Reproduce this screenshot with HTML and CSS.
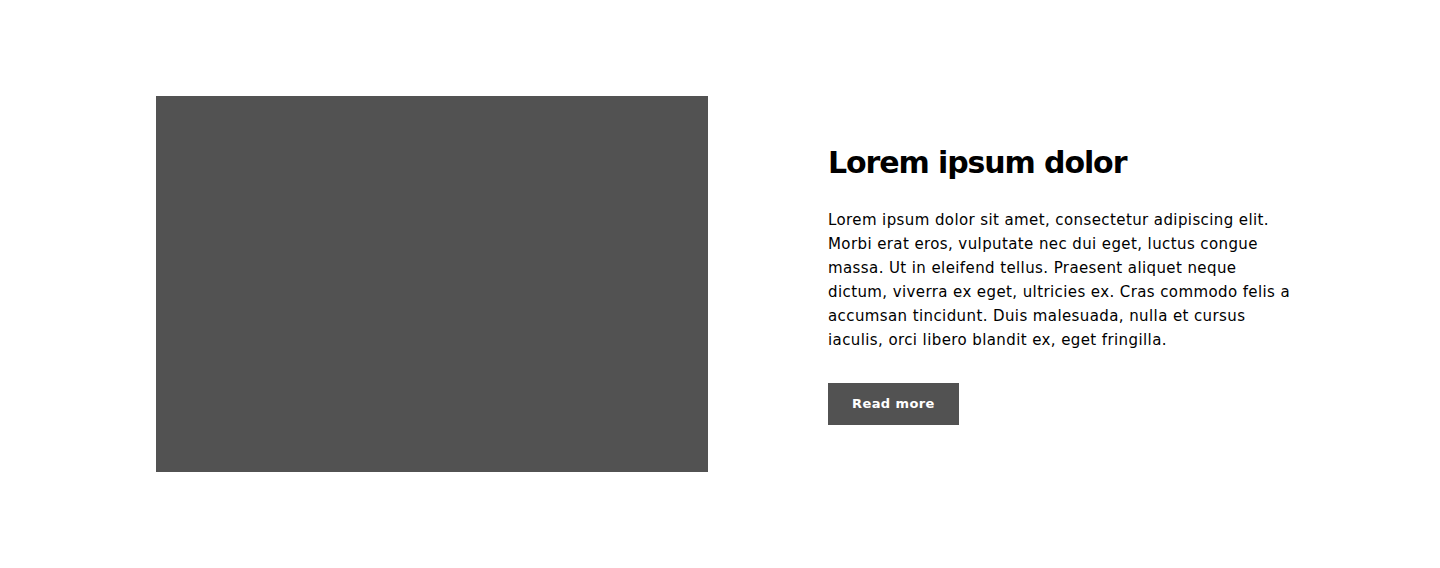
FILE: index.html
```html
<!DOCTYPE html>
<html lang="en">
<head>
<meta charset="utf-8">
<title>Feature</title>
<link rel="stylesheet" href="styles.css">
</head>
<body>
<section class="feature">
  <div class="feature-media"></div>
  <div class="feature-body">
    <h2 class="feature-title">Lorem ipsum dolor</h2>
    <p class="feature-text">Lorem ipsum dolor sit amet, consectetur adipiscing elit. Morbi erat eros, vulputate nec dui eget, luctus congue massa. Ut in eleifend tellus. Praesent aliquet neque dictum, viverra ex eget, ultricies ex. Cras commodo felis a accumsan tincidunt. Duis malesuada, nulla et cursus iaculis, orci libero blandit ex, eget fringilla.</p>
    <a class="btn" href="#">Read more</a>
  </div>
</section>
</body>
</html>
```

FILE: styles.css
```css
* { box-sizing: border-box; }
html, body { margin: 0; padding: 0; background: #fff; }
body { font-family: "DejaVu Sans", "Noto Sans", sans-serif; color: #000; }
.feature {
  display: grid;
  grid-template-columns: 552px 466px;
  column-gap: 120px;
  align-items: center;
  padding: 96px 146px 96px 156px;
}
.feature-media {
  height: 376px;
  background: #525252;
}
.feature-body {
  padding-bottom: 1px;
}
.feature-title {
  margin: 0 0 25px;
  font-size: 30px;
  font-weight: 700;
  line-height: 40px;
  letter-spacing: -1.1px;
}
.feature-text {
  margin: 0 0 31px;
  font-size: 15px;
  line-height: 24px;
  letter-spacing: 0.4px;
}
.btn {
  display: inline-block;
  background: #525252;
  color: #fff;
  text-decoration: none;
  font-size: 13px;
  font-weight: 700;
  line-height: 42px;
  padding: 0 24px;
  letter-spacing: 0.4px;
}
```
